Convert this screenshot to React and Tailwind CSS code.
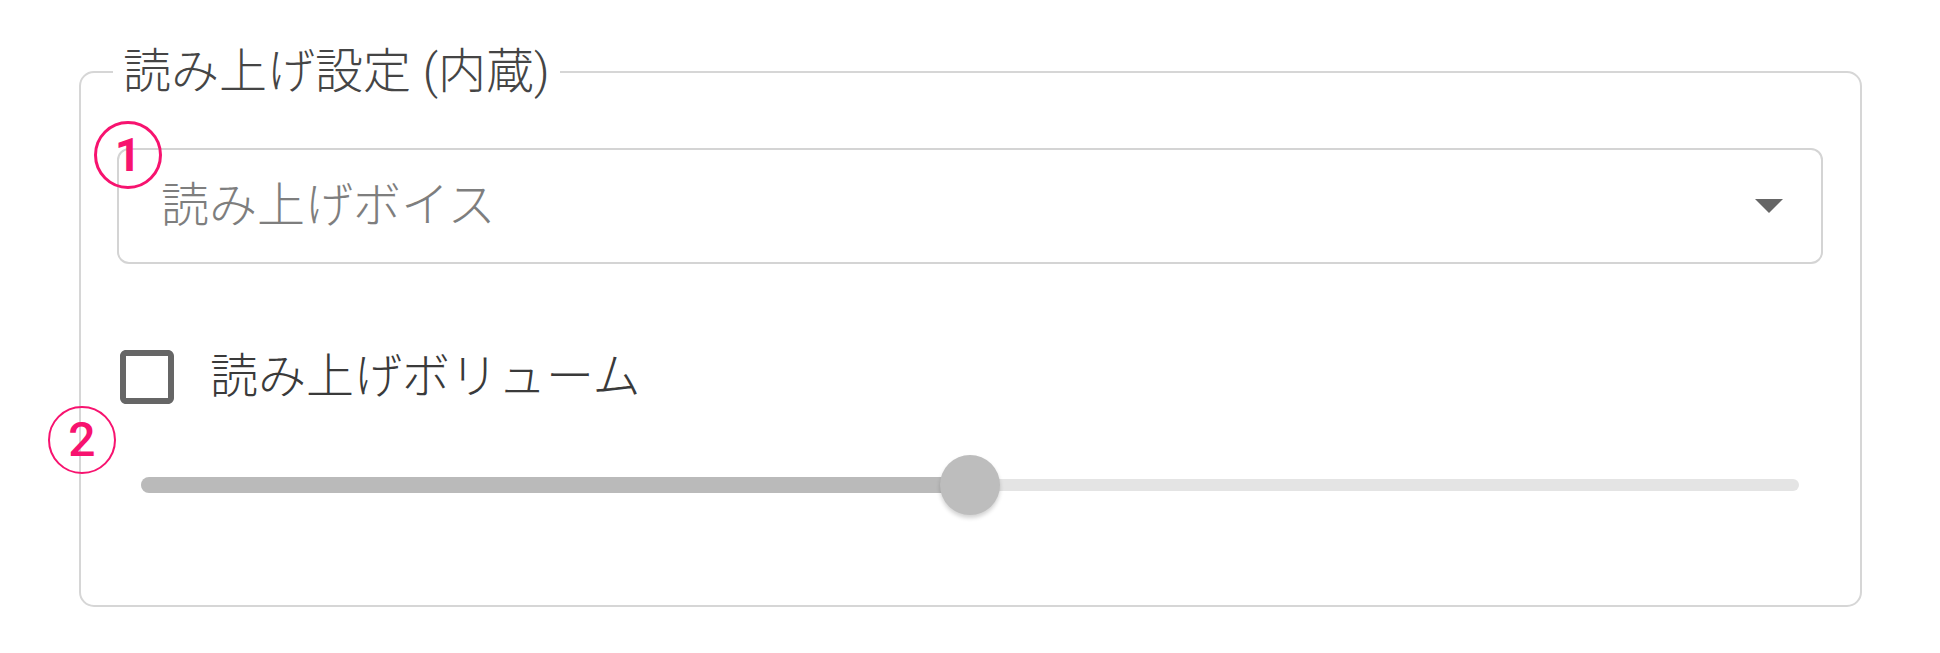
export default function App() {
  return (
    <div className="relative w-[1940px] h-[653px] bg-white pl-[79px] pr-[78px] pt-[44px] font-['Roboto','Noto_Sans_CJK_JP',sans-serif]">
      <fieldset className="m-0 p-0 border-2 border-[#d6d6d6] rounded-[15px]">
        <legend className="ml-[32px] px-[10px] text-[48px] leading-[56px] font-light text-[#454545]">
          読み上げ設定 (内蔵)
        </legend>
        <div className="pt-[48px] pl-[36px] pr-[37px] pb-[90px]">
          <div className="h-[116px] border-2 border-[#d4d4d4] rounded-[12px] flex items-center justify-between pl-[42px] pr-[38px]">
            <span className="text-[48px] leading-[56px] font-light text-[#7e7e7e]">読み上げボイス</span>
            <svg width="28" height="14" viewBox="0 0 28 14">
              <polygon points="0,0 28,0 14,14" fill="#666666" />
            </svg>
          </div>
          <div className="mt-[77px] flex items-center h-[72px] -ml-[6px]">
            <svg width="72" height="72" viewBox="0 0 24 24">
              <path
                fill="#666666"
                d="M19 5v14H5V5h14m0-2H5c-1.11 0-2 .9-2 2v14c0 1.1.89 2 2 2h14c1.1 0 2-.9 2-2V5c0-1.1-.9-2-2-2z"
              />
            </svg>
            <span className="ml-[27px] text-[48px] leading-[56px] font-light text-[#3a3a3a]">読み上げボリューム</span>
          </div>
          <div className="mt-[42px] mx-[24px] h-[60px] flex items-center">
            <div className="relative w-full h-[12px] rounded-full bg-[#e4e4e4]">
              <div className="absolute left-0 top-[-2px] h-[16px] w-1/2 rounded-full bg-[#bababa]" />
              <div className="absolute left-1/2 top-1/2 w-[60px] h-[60px] -translate-x-1/2 -translate-y-1/2 rounded-full bg-[#bdbdbd] shadow-[0_3px_4px_rgba(0,0,0,0.18)]" />
            </div>
          </div>
        </div>
      </fieldset>

      <div className="absolute left-[94px] top-[121px] w-[68px] h-[68px] rounded-full border-[3px] border-[#f7136f] flex items-center justify-center">
        <span className="text-[46px] leading-none font-bold text-[#f7136f] font-['Roboto',sans-serif]">1</span>
      </div>
      <div className="absolute left-[48px] top-[406px] w-[68px] h-[68px] rounded-full border-[2px] border-[#f7136f] flex items-center justify-center">
        <span className="text-[48px] leading-none font-medium text-[#f7136f] font-['Roboto',sans-serif]">2</span>
      </div>
    </div>
  );
}
